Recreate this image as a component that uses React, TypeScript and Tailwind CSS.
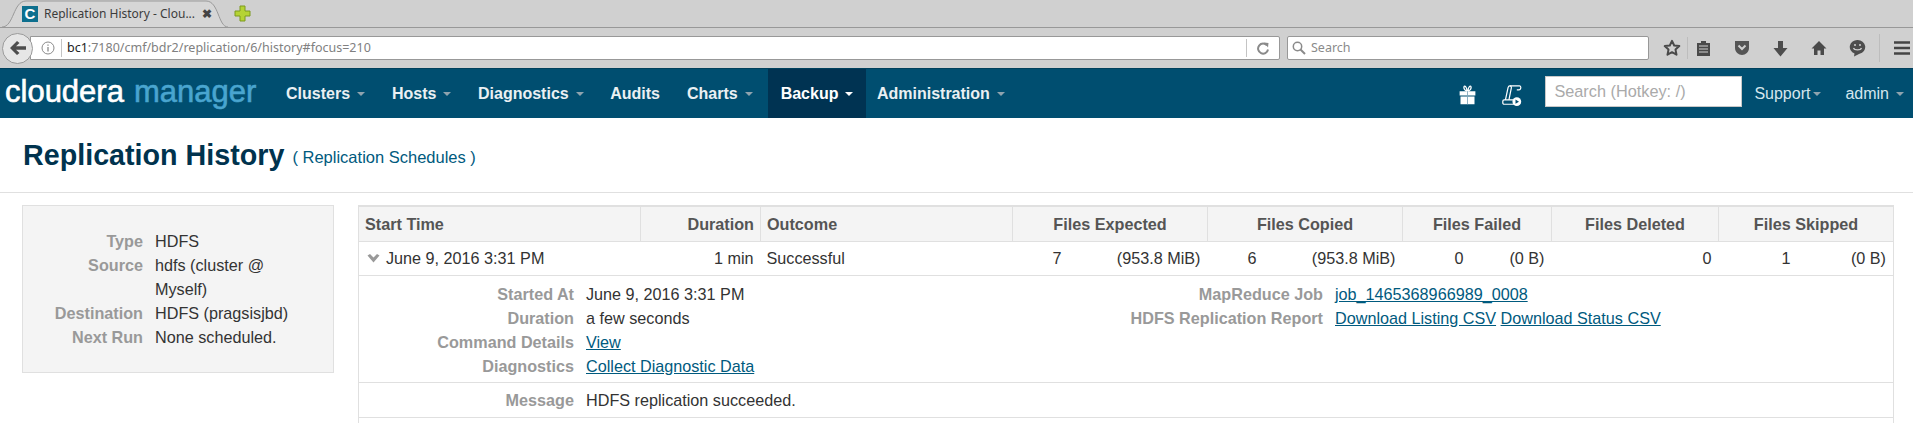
import { ReactNode } from 'react';

const sans = 'font-["Liberation_Sans",Arial,sans-serif]';

function Caret({ className = 'border-t-[#8fa3ae]' }: { className?: string }) {
  return <span className={`inline-block ml-[7px] w-0 h-0 border-x-[4px] border-x-transparent border-t-[4px] ${className}`} />;
}

function NavItem({ label, active, className = '' }: { label: string; active?: boolean; className?: string }) {
  return (
    <a className={`flex items-center h-[49px] font-bold text-[16px] text-[#eaf0f3] ${active ? 'bg-[#003352] text-white' : ''} ${className}`}>
      {label}
      <Caret className={active ? 'border-t-white' : 'border-t-[#8fa3ae]'} />
    </a>
  );
}

function Tab() {
  return (
    <div className="relative w-[226px] h-[27px] ml-[2px] flex items-center">
      <svg width="226" height="28" viewBox="0 0 226 28" className="absolute left-0 top-0">
        <path d="M0 27 C12 27 11 1 24 1 L204 1 C217 1 216 27 226 27" fill="#d6d6d6" stroke="#9a9a9a" />
      </svg>
      <div className="relative flex items-center pl-[20px] font-['Noto_Sans',sans-serif] text-[12px] text-[#3c3c3c] whitespace-nowrap">
        <span className="flex items-center justify-center w-[16px] h-[16px] bg-[#0d6f8e] text-white font-bold text-[15px] leading-none font-['Liberation_Sans',sans-serif]">C</span>
        <span className="ml-[6px] w-[158px]">Replication History - Clou...</span>
        <span className="text-[12px] font-bold text-[#444]">✖</span>
      </div>
    </div>
  );
}

function PlusIcon() {
  return (
    <svg width="17" height="17" viewBox="0 0 17 17" className="ml-[6px] mb-[1px]">
      <path d="M6 1h5v5h5v5h-5v5H6v-5H1V6h5z" fill="#b5d334" stroke="#7d9a1e" />
    </svg>
  );
}

function BackButton() {
  return (
    <div className="relative z-10 flex items-center justify-center w-[31px] h-[31px] rounded-full bg-[#e6e6e6] border border-[#9a9a9a] shrink-0">
      <svg width="18" height="16" viewBox="0 0 18 16">
        <path d="M8 1 L1 8 L8 15 L10.5 13 L7 9.8 H17 V6.2 H7 L10.5 3 Z" fill="#4d4d4d" />
      </svg>
    </div>
  );
}

function ToolbarIcons() {
  return (
    <div className="flex items-center text-[#4d4d4d]">
      <svg width="18" height="18" viewBox="0 0 18 18" className="ml-[14px]">
        <path d="M9 1.8l2.2 4.7 5.1.6-3.8 3.5 1 5.1L9 13.2l-4.5 2.5 1-5.1L1.700 7.100l5.1-.6z" fill="none" stroke="#4a4a4a" strokeWidth="2" strokeLinejoin="round" />
      </svg>
      <span className="w-px h-[22px] bg-[#bdbdbd] ml-[6px]" />
      <svg width="15" height="18" viewBox="0 0 15 18" className="ml-[8px]">
        <path d="M1 4h4V2h5v2h4v13H1z" fill="#4a4a4a" />
        <path d="M3 7h9M3 10h9M3 13h9" stroke="#d0d0d0" strokeWidth="1" />
      </svg>
      <svg width="16" height="16" viewBox="0 0 16 16" className="ml-[23px]">
        <path d="M1 1h14v7c0 4-3.500 7-7 7s-7-3-7-7z" fill="#555" />
        <path d="M4.500 5.500L8 9l3.500-3.500" fill="none" stroke="#d0d0d0" strokeWidth="2" />
      </svg>
      <svg width="15" height="17" viewBox="0 0 15 17" className="ml-[23px]">
        <path d="M5 1h5v7h4.500l-7 8.500-7-8.500H5z" fill="#4d4d4d" />
      </svg>
      <svg width="16" height="16" viewBox="0 0 16 16" className="ml-[23px]">
        <path d="M8 1L0.500 8.500h2.500V15h3.500v-4.500h3V15H13V8.500h2.500z" fill="#4a4a4a" />
      </svg>
      <svg width="17" height="18" viewBox="0 0 17 18" className="ml-[22px]">
        <path d="M8.500 1a7.500 7 0 0 1 2 13.800L5 17.500l.5-3A7.500 7 0 0 1 8.500 1z" fill="#4d4d4d" />
        <circle cx="6" cy="6" r="1" fill="#d0d0d0" />
        <circle cx="11" cy="6" r="1" fill="#d0d0d0" />
        <path d="M4.500 9c1 2.500 7 2.500 8 0" fill="none" stroke="#d0d0d0" strokeWidth="1.200" />
      </svg>
      <span className="w-px h-[28px] bg-[#bdbdbd] ml-[13px]" />
      <svg width="16" height="14" viewBox="0 0 16 14" className="ml-[14px]">
        <path d="M0 1.500h16M0 7h16M0 12.500h16" stroke="#444" strokeWidth="2.600" />
      </svg>
    </div>
  );
}

function BrowserChrome() {
  return (
    <div className="bg-[#d0d0d0] h-[68px] flex flex-col overflow-hidden">
      <div className="h-[28px] border-b border-[#989898] flex items-center shrink-0">
        <Tab />
        <PlusIcon />
      </div>
      <div className="flex-1 flex items-center pl-[2px] font-['Noto_Sans',sans-serif] text-[12.5px]">
        <BackButton />
        <div className="flex items-center w-[1250px] h-[24px] -ml-[3px] bg-white border border-[#989898] rounded-r-[2px]">
          <svg width="14" height="14" viewBox="0 0 14 14" className="ml-[10px]">
            <circle cx="7" cy="7" r="6" fill="none" stroke="#8a8a8a" />
            <path d="M7 6v4.500M7 3.500v1.200" stroke="#8a8a8a" strokeWidth="1.300" />
          </svg>
          <span className="w-px h-[18px] bg-[#c4c4c4] ml-[6px]" />
          <span className="ml-[5px] text-[#808080] whitespace-nowrap"><span className="text-[#222]">bc1</span>:7180/cmf/bdr2/replication/6/history#focus=210</span>
          <span className="ml-auto w-px h-[18px] bg-[#c4c4c4]" />
          <svg width="12" height="13" viewBox="0 0 12 13" className="mx-[10px]">
            <path d="M10 3.500A5 5 0 1 0 11 7.500" fill="none" stroke="#8a8a8a" strokeWidth="2" />
            <path d="M7 0.500l4.500.5-.5 4.500z" fill="#8a8a8a" />
          </svg>
        </div>
        <div className="flex items-center w-[362px] h-[24px] ml-[7px] bg-white border border-[#989898] rounded-[2px] text-[#8a8a8a]">
          <svg width="14" height="14" viewBox="0 0 14 14" className="ml-[4px]">
            <circle cx="5.500" cy="5.500" r="4.200" fill="none" stroke="#8a8a8a" strokeWidth="1.500" />
            <path d="M8.500 8.500L13 13" stroke="#8a8a8a" strokeWidth="2" />
          </svg>
          <span className="ml-[5px]">Search</span>
        </div>
        <ToolbarIcons />
      </div>
    </div>
  );
}

function GiftIcon() {
  return (
    <svg width="19" height="21" viewBox="0 0 20 24" className="mt-[4px]">
      <path d="M9.500 7C7 6 5.500 4 6 2c.8-1.500 3-.5 3.500 5zM10.500 7c2.500-1 4-3 3.500-5-.8-1.500-3-.5-3.500 5z" fill="none" stroke="#fff" strokeWidth="1.500" />
      <path d="M1 7h18v5H1zM2 13h16v9H2z" fill="#fff" />
      <path d="M10 7v15" stroke="#7fa6ba" strokeWidth="1" />
    </svg>
  );
}

function ScrollIcon() {
  return (
    <svg width="22" height="21" viewBox="0 0 23 24" fill="none" className="mt-[4px]">
      <path d="M4 17L7 3c.3-1.200 1-2 2-2h11c1 0 1.800 1 1.500 2.500-.3 1.200-1 2-2 2H17" stroke="#fff" strokeWidth="1.400" />
      <path d="M9 1c1.500 0 2 1 1.700 2.500L8 17" stroke="#fff" strokeWidth="1.400" />
      <rect x="1" y="17" width="13" height="5" rx="1.500" stroke="#fff" strokeWidth="1.400" />
      <circle cx="17" cy="19" r="5" fill="#fff" />
      <path d="M15.500 16.500l4 2.500-4 2.500z" fill="#004e70" />
    </svg>
  );
}

function Navbar() {
  return (
    <div className={`relative h-[50px] bg-[#004e70] border-t border-[#00405c] flex items-center ${sans}`}>
      <div className="pl-[5px] w-[275px] shrink-0 text-[31px] leading-none whitespace-nowrap -mt-[4px] [-webkit-text-stroke:0.6px]">
        <span className="text-white">cloudera</span>
        <span className="ml-[10px] text-[#49a5cf]">manager</span>
      </div>
      <NavItem label="Clusters" className="pl-[11px] pr-[14px]" />
      <NavItem label="Hosts" className="px-[13px]" />
      <NavItem label="Diagnostics" className="px-[13.500px]" />
      <a className="flex items-center h-[49px] font-bold text-[16px] text-[#eaf0f3] px-[13px]">Audits</a>
      <NavItem label="Charts" className="pl-[14px] pr-[15px]" />
      <NavItem label="Backup" active className="px-[13px]" />
      <NavItem label="Administration" className="pl-[10.500px] pr-[12px]" />
      <div className="ml-auto flex items-center">
        <GiftIcon />
        <div className="ml-[24px]"><ScrollIcon /></div>
        <div className="ml-[22px] mb-[4px] flex items-center w-[197px] h-[31px] bg-white border border-[#c8c8c8] pl-[8px] pb-[1px] text-[16.300px] text-[#aaa]">Search (Hotkey: /)</div>
        <a className="ml-[12px] flex items-center text-[16px] text-[#d5e6ee]">Support<Caret className="border-t-[#8fa3ae] !ml-[3px]" /></a>
        <a className="ml-[24px] mr-[9px] flex items-center text-[16px] text-[#d5e6ee]">admin<Caret className="border-t-[#8fa3ae]" /></a>
      </div>
    </div>
  );
}

function Field({ label, children, wrap }: { label: string; children: ReactNode; wrap?: string }) {
  return (
    <div className="flex leading-[24px]">
      <div className={`text-right font-bold text-[#999] shrink-0 ${wrap}`}>{label}</div>
      <div className="ml-[12px]">{children}</div>
    </div>
  );
}

function TLink({ children }: { children: ReactNode }) {
  return <a className="text-[#005a7e] underline">{children}</a>;
}

function Sidebar() {
  return (
    <div className="w-[312px] h-[168px] shrink-0 bg-[#f4f4f4] border border-[#e0e0e0] pt-[23px] text-[#333] text-[16.200px]">
      <div className="w-[290px]">
        <Field label="Type" wrap="w-[120px]">HDFS</Field>
        <Field label="Source" wrap="w-[120px]"><div className="w-[130px]">hdfs (cluster @ Myself)</div></Field>
        <Field label="Destination" wrap="w-[120px]">HDFS (pragsisjbd)</Field>
        <Field label="Next Run" wrap="w-[120px]">None scheduled.</Field>
      </div>
    </div>
  );
}

const th = 'h-[35px] px-[6px] font-bold text-[#555] border-l border-b border-[#e0e0e0]';
const td = 'h-[34px] px-[7px] text-[#333] border-b border-[#e0e0e0]';

function HistoryTable() {
  return (
    <table className="w-[1535px] table-fixed border-collapse border-t-[2px] border-x border-[#e0e0e0] text-[16.200px] shrink-0">
      <colgroup>
        <col className="w-[282px]" />
        <col className="w-[120px]" />
        <col className="w-[252px]" />
        <col className="w-[195px]" />
        <col className="w-[195px]" />
        <col className="w-[149px]" />
        <col className="w-[167px]" />
        <col className="w-[175px]" />
      </colgroup>
      <thead className="bg-[#f4f4f4]">
        <tr>
          <th className={`${th} text-left`}>Start Time</th>
          <th className={`${th} text-right`}>Duration</th>
          <th className={`${th} text-left`}>Outcome</th>
          <th className={`${th} text-center`}>Files Expected</th>
          <th className={`${th} text-center`}>Files Copied</th>
          <th className={`${th} text-center`}>Files Failed</th>
          <th className={`${th} text-center`}>Files Deleted</th>
          <th className={`${th} text-center`}>Files Skipped</th>
        </tr>
      </thead>
      <tbody>
        <tr>
          <td className={td}>
            <div className="flex items-center pl-[1px]">
              <svg width="13" height="10" viewBox="0 0 13 10" className="mt-[3px]">
                <path d="M0.500 1.500L3 0l3.500 3.500L10 0l2.500 1.500-6 7z" fill="#999" />
              </svg>
              <span className="ml-[6px]">June 9, 2016 3:31 PM</span>
            </div>
          </td>
          <td className={`${td} text-right`}>1 min</td>
          <td className={`${td} !px-[6px]`}>Successful</td>
          <td className={td}><div className="flex justify-between pl-[33px]"><span>7</span><span>(953.8 MiB)</span></div></td>
          <td className={td}><div className="flex justify-between pl-[33px]"><span>6</span><span>(953.8 MiB)</span></div></td>
          <td className={td}><div className="flex justify-between pl-[45px]"><span>0</span><span>(0 B)</span></div></td>
          <td className={`${td} text-right`}>0</td>
          <td className={td}><div className="flex justify-between pl-[56px]"><span>1</span><span>(0 B)</span></div></td>
        </tr>
        <tr>
          <td colSpan={8} className="h-[107px] border-b border-[#e0e0e0] align-top text-[#333]">
            <div className="flex pt-[6px]">
              <div className="w-[650px] shrink-0">
                <Field label="Started At" wrap="w-[215px]">June 9, 2016 3:31 PM</Field>
                <Field label="Duration" wrap="w-[215px]">a few seconds</Field>
                <Field label="Command Details" wrap="w-[215px]"><TLink>View</TLink></Field>
                <Field label="Diagnostics" wrap="w-[215px]"><TLink>Collect Diagnostic Data</TLink></Field>
              </div>
              <div>
                <Field label="MapReduce Job" wrap="w-[314px]"><TLink>job_1465368966989_0008</TLink></Field>
                <Field label="HDFS Replication Report" wrap="w-[314px]">
                  <TLink>Download Listing CSV</TLink> <TLink>Download Status CSV</TLink>
                </Field>
              </div>
            </div>
          </td>
        </tr>
        <tr>
          <td colSpan={8} className="h-[35px] border-b border-[#e0e0e0] text-[#333]">
            <Field label="Message" wrap="w-[215px]">HDFS replication succeeded.</Field>
          </td>
        </tr>
        <tr>
          <td colSpan={8} className="h-[20px]" />
        </tr>
      </tbody>
    </table>
  );
}

export default function App() {
  return (
    <div className={`h-[423px] overflow-hidden bg-white ${sans}`}>
      <BrowserChrome />
      <Navbar />
      <div className="h-[75px] border-b border-[#e0e0e0] flex items-baseline pl-[23px] pt-[16px]">
        <h1 className="text-[28.700px] font-bold text-[#00334e]">Replication History</h1>
        <span className="ml-[8px] -translate-y-[2px] text-[16.500px] text-[#005a7e]">( Replication Schedules )</span>
      </div>
      <div className="flex items-start gap-[24px] pl-[22px] pt-[12px]">
        <Sidebar />
        <HistoryTable />
      </div>
    </div>
  );
}
